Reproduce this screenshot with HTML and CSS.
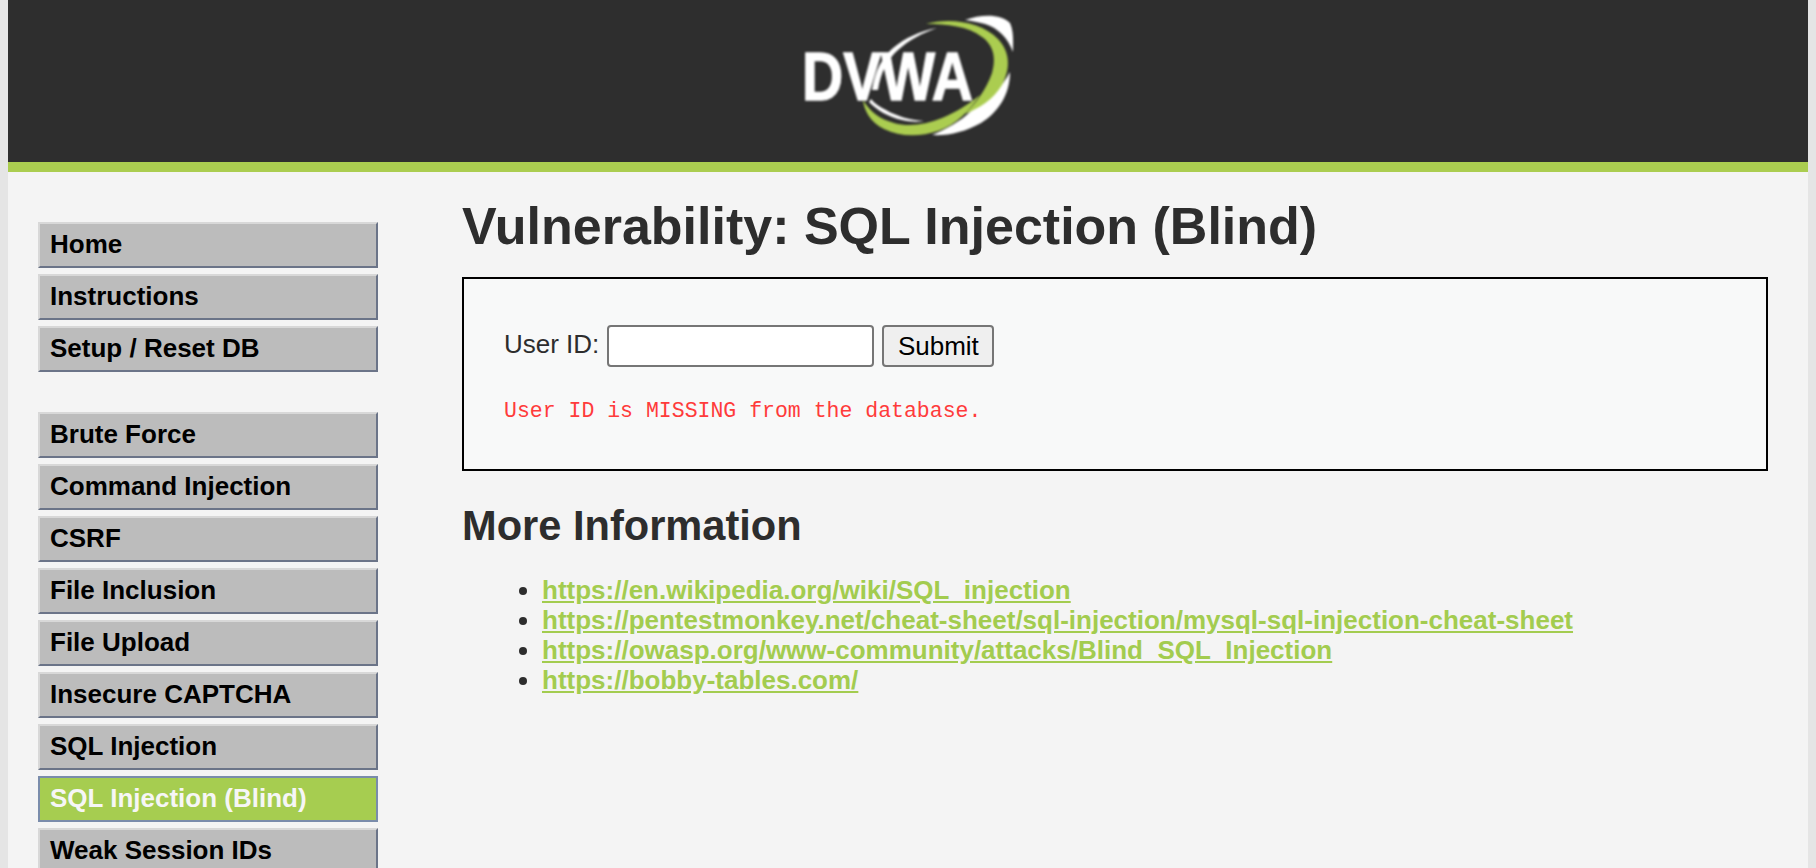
FILE: index.html
```html
<!DOCTYPE html>
<html lang="en">
<head>
<meta charset="utf-8">
<title>Vulnerability: SQL Injection (Blind)</title>
<link rel="stylesheet" href="styles.css">
</head>
<body>
<div class="container">
  <header class="header">
    <svg class="logo" viewBox="8 0 280 162" width="280" height="162" role="img" aria-label="DVWA">
      <g class="logo-blur">
        <path class="white" d="M205 20C222 14 241 14 250 23C254 32 253 42 253 52C248 38 238 28 225 24C218 22 212 21 205 20Z"/>
        <path class="white" d="M250 72C250 96 237 113 221 123C205 132 188 136 172 135C186 129 200 122 212 110C228 100 243 86 250 72Z"/>
        <path class="white" d="M177 28C160 31 145 38 133 48C122 58 115 70 112 90L118 90C121 72 127 60 138 50C149 40 162 33 177 28Z"/>
        <path class="white" d="M109 102C117 110 128 117 142 120C150 122 158 122 164 121C150 120 136 116 126 110C120 107 115 104 111 99Z"/>
        <text class="logo-text" x="42" y="99.500" textLength="171" lengthAdjust="spacingAndGlyphs">DVWA</text>
        <path class="green" d="M166 24C190 17 222 22 238 39C250 52 251 68 242 85C233 100 219 108 205 114C216 103 226 90 232 73C237 56 232 44 222 37C208 26 187 24 166 24Z"/>
        <path class="green" d="M103 100C104 110 110 122 124 129C140 137 160 137 178 131C196 125 210 110 220 95C208 105 196 112 182 118C165 125 148 127 134 123C120 119 110 112 103 100Z"/>
      </g>
    </svg>
  </header>
  <div class="body-row">
    <nav class="menu">
      <ul class="menu-group">
        <li class="menu-item"><a href="#">Home</a></li>
        <li class="menu-item"><a href="#">Instructions</a></li>
        <li class="menu-item"><a href="#">Setup / Reset DB</a></li>
      </ul>
      <ul class="menu-group">
        <li class="menu-item"><a href="#">Brute Force</a></li>
        <li class="menu-item"><a href="#">Command Injection</a></li>
        <li class="menu-item"><a href="#">CSRF</a></li>
        <li class="menu-item"><a href="#">File Inclusion</a></li>
        <li class="menu-item"><a href="#">File Upload</a></li>
        <li class="menu-item"><a href="#">Insecure CAPTCHA</a></li>
        <li class="menu-item"><a href="#">SQL Injection</a></li>
        <li class="menu-item selected"><a href="#">SQL Injection (Blind)</a></li>
        <li class="menu-item"><a href="#">Weak Session IDs</a></li>
      </ul>
    </nav>
    <main class="content">
      <h1 class="title">Vulnerability: SQL Injection (Blind)</h1>
      <section class="vuln-box">
        <form class="vuln-form">
          <label class="vuln-label" for="uid">User ID:</label>
          <input class="vuln-input" id="uid" type="text">
          <button class="vuln-submit" type="button">Submit</button>
        </form>
        <pre class="vuln-error">User ID is MISSING from the database.</pre>
      </section>
      <h2 class="subtitle">More Information</h2>
      <ul class="links">
        <li><a href="#">https://en.wikipedia.org/wiki/SQL_injection</a></li>
        <li><a href="#">https://pentestmonkey.net/cheat-sheet/sql-injection/mysql-sql-injection-cheat-sheet</a></li>
        <li><a href="#">https://owasp.org/www-community/attacks/Blind_SQL_Injection</a></li>
        <li><a href="#">https://bobby-tables.com/</a></li>
      </ul>
    </main>
  </div>
</div>
</body>
</html>
```
FILE: styles.css
```css
* { box-sizing: border-box; }
html, body { height: 100%; overflow: hidden; }
body {
  margin: 0;
  padding: 0 8px;
  background: #e5e5e5;
  font-family: "Liberation Sans", Arial, sans-serif;
  color: #2d2d2d;
}
.container { background: #f4f4f4; height: 100%; overflow: hidden; }
.header {
  height: 172px;
  background: #2e2e2e;
  border-bottom: 10px solid #abcd50;
  display: flex;
  justify-content: center;
}
.logo { display: block; }
.logo-blur { filter: blur(0.8px); }
.white { fill: #fff; }
.green { fill: #abcd50; }
.logo-text {
  font-family: "Liberation Sans", Arial, sans-serif;
  font-weight: 700;
  font-size: 69px;
  fill: #fff;
  stroke: #fff;
  stroke-width: 1.4px;
}
.body-row { display: flex; align-items: flex-start; }
.menu { margin: 50px 0 0 30px; width: 340px; flex: none; }
.menu-group { list-style: none; margin: 0 0 40px; padding: 0; }
.menu-item { margin-bottom: 6px; }
.menu-item a {
  display: block;
  height: 46px;
  line-height: 41px;
  padding-left: 10px;
  background: #bcbcbc;
  border: 2px solid;
  border-color: #d8d8d8 #6b7488 #6b7488 #d8d8d8;
  color: #000;
  font-weight: 700;
  font-size: 26px;
  text-decoration: none;
}
.menu-item.selected a {
  background: #a6cd50;
  border-color: #7a8cab;
  color: #f6f6f6;
}
.content { margin-left: 84px; width: 1306px; flex: none; }
.title {
  margin: 25px 0 0;
  font-size: 52px;
  line-height: 59px;
  font-weight: 700;
  color: #2d2d2d;
}
.vuln-box {
  margin-top: 21px;
  height: 194px;
  background: #f8f9f9;
  border: 2px solid #000;
  padding: 46px 40px 0;
}
.vuln-form { display: flex; align-items: center; }
.vuln-label { font-size: 26px; margin: 0 8px 4px 0; }
.vuln-input {
  width: 267px;
  height: 42px;
  border: 2px solid #767676;
  border-radius: 4px;
  background: #fff;
  margin: 0 8px 0 0;
}
.vuln-submit {
  width: 112px;
  height: 42px;
  padding: 0;
  border: 2px solid #767676;
  border-radius: 4px;
  background: #efefef;
  color: #000;
  font-family: "Liberation Sans", Arial, sans-serif;
  font-size: 26px;
}
.vuln-error {
  margin: 29px 0 0;
  font-family: "Liberation Mono", monospace;
  font-size: 21.5px;
  line-height: 30px;
  color: #ff3b3b;
}
.subtitle {
  margin: 31px 0 0;
  font-size: 41.6px;
  line-height: 48px;
  font-weight: 700;
  color: #2d2d2d;
}
.links {
  margin: 25px 0 0;
  padding: 0 0 0 80px;
  font-size: 26px;
  line-height: 30px;
}
.links a { color: #a3cc4f; font-weight: 700; }
```
